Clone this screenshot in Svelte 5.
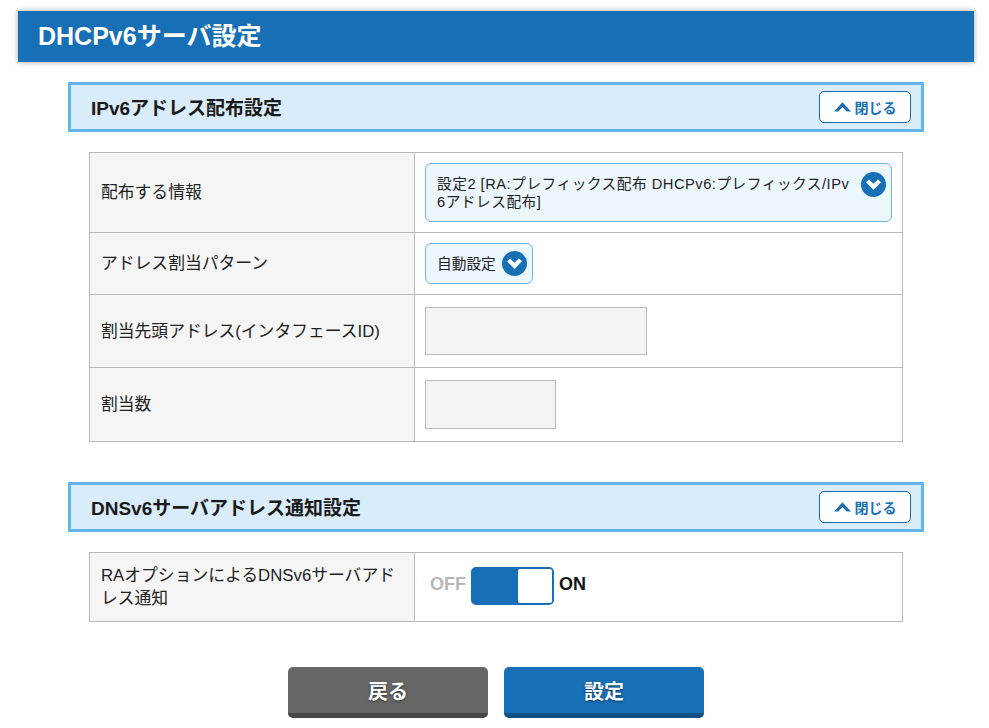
<script>
	// chevron and close button repeat, so they live in snippets below
	const closeLabel = '閉じる';
</script>

{#snippet chevron()}
	<svg class="chev" viewBox="0 0 26 26" width="25" height="25" aria-hidden="true">
		<circle cx="13" cy="13" r="13" fill="#176fb5" />
		<path d="M5.2 10.6 L8.4 7.8 L13 12.2 L17.6 7.8 L20.8 10.6 L13 18.6 Z" fill="#fff" />
	</svg>
{/snippet}

{#snippet closeBtn()}
	<button class="close" type="button">
		<svg viewBox="0 0 17 10" width="17" height="10" aria-hidden="true">
			<path d="M0 9.6 L8.5 0.2 L17 9.6 L12.6 9.6 L8.5 5 L4.4 9.6 Z" fill="#176fb5" />
		</svg>
		<span>{closeLabel}</span>
	</button>
{/snippet}

<div class="page">
	<h1>DHCPv6サーバ設定</h1>

	<section class="sec">
		<div class="sec-head">
			<h2>IPv6アドレス配布設定</h2>
			{@render closeBtn()}
		</div>
		<table>
			<tbody>
				<tr class="r1">
					<th>配布する情報</th>
					<td>
						<div class="select wide">
							<span>設定2 [RA:プレフィックス配布 DHCPv6:プレフィックス/IPv6アドレス配布]</span>
							{@render chevron()}
						</div>
					</td>
				</tr>
				<tr class="r2">
					<th>アドレス割当パターン</th>
					<td>
						<div class="select">
							<span>自動設定</span>
							{@render chevron()}
						</div>
					</td>
				</tr>
				<tr class="r3">
					<th>割当先頭アドレス(インタフェースID)</th>
					<td><div class="field f-long"></div></td>
				</tr>
				<tr class="r4">
					<th>割当数</th>
					<td><div class="field f-short"></div></td>
				</tr>
			</tbody>
		</table>
	</section>

	<section class="sec second">
		<div class="sec-head">
			<h2>DNSv6サーバアドレス通知設定</h2>
			{@render closeBtn()}
		</div>
		<table>
			<tbody>
				<tr class="r5">
					<th>RAオプションによるDNSv6サーバアドレス通知</th>
					<td>
						<div class="toggle-row">
							<span class="off">OFF</span>
							<div class="toggle"><div class="knob"></div></div>
							<span class="on">ON</span>
						</div>
					</td>
				</tr>
			</tbody>
		</table>
	</section>

	<div class="actions">
		<button class="btn back" type="button">戻る</button>
		<button class="btn save" type="button">設定</button>
	</div>
</div>

<style>
	:global(body) {
		background: #fff;
		font-family: "Liberation Sans", "Noto Sans CJK JP", sans-serif;
		color: #222;
	}

	.page {
		padding: 11px 15px 10px 18px;
	}

	h1 {
		margin: 0;
		height: 51px;
		line-height: 51px;
		padding-left: 20px;
		background: #176fb5;
		color: #fff;
		font-size: 25px;
		font-weight: 700;
		box-shadow: 0 0 6px rgba(0, 0, 0, 0.35);
	}

	.sec {
		margin: 20px 50px 0;
	}

	.second {
		margin-top: 40px;
	}

	.sec-head {
		display: flex;
		align-items: center;
		justify-content: space-between;
		box-sizing: border-box;
		height: 50px;
		padding: 0 10px 0 20px;
		background: #d9ecfb;
		border: 3px solid #62b4ec;
	}

	h2 {
		margin: 0 0 2px;
		font-size: 19px;
		font-weight: 700;
		color: #1a1a1a;
	}

	.close {
		display: flex;
		align-items: center;
		justify-content: center;
		gap: 4px;
		box-sizing: border-box;
		width: 92px;
		height: 32px;
		padding: 0;
		background: #fff;
		border: 1px solid #176fb5;
		border-radius: 5px;
		color: #176fb5;
		font-family: inherit;
		font-size: 14px;
		font-weight: 700;
	}

	table {
		width: 814px;
		margin: 20px 0 0 21px;
		border-collapse: collapse;
		table-layout: fixed;
	}

	th,
	td {
		border: 1px solid #b9b9b9;
		padding: 0 11px;
		text-align: left;
		font-size: 16.8px;
		font-weight: 400;
		line-height: 23px;
		color: #222;
	}

	th {
		width: 302px;
		background: #f5f5f5;
	}

	td {
		padding: 0 10px;
	}

	.r1 { height: 80px; }
	.r2 { height: 62px; }
	.r3 { height: 73px; }
	.r4 { height: 74px; }
	.r5 { height: 69px; }

	.select {
		display: inline-flex;
		align-items: center;
		gap: 6px;
		box-sizing: border-box;
		height: 41px;
		padding: 0 5px 0 11px;
		background: #ecf6fd;
		border: 1px solid #6fb6e3;
		border-radius: 6px;
		font-size: 14.7px;
		line-height: 18px;
		color: #222;
		vertical-align: middle;
	}

	.wide {
		display: flex;
		align-items: flex-start;
		justify-content: space-between;
		width: 467px;
		height: 59px;
		padding: 8px 5px 0 11px;
		gap: 6px;
	}

	.wide span {
		flex: 1;
		padding-top: 3px;
		letter-spacing: 0.5px;
		word-break: break-all;
	}

	.chev {
		flex: none;
	}

	.field {
		box-sizing: border-box;
		height: 48px;
		background: #f4f4f4;
		border: 1px solid #b9b9b9;
		vertical-align: middle;
	}

	.f-long {
		width: 222px;
	}

	.f-short {
		width: 131px;
		height: 49px;
	}

	.toggle-row {
		display: flex;
		align-items: center;
		gap: 5px;
		padding-left: 5px;
		font-size: 18px;
		font-weight: 700;
		margin-bottom: 6px;
	}

	.off {
		color: #b8b8b8;
	}

	.on {
		color: #111;
	}

	.toggle {
		display: flex;
		justify-content: flex-end;
		box-sizing: border-box;
		width: 83px;
		height: 38px;
		margin-top: 3px;
		background: #176fb5;
		border: 2px solid #176fb5;
		border-radius: 5px;
	}

	.knob {
		width: 34px;
		background: #fff;
		border-radius: 2px;
	}

	.actions {
		display: flex;
		justify-content: center;
		gap: 16px;
		margin-top: 45px;
	}

	.btn {
		box-sizing: border-box;
		width: 200px;
		height: 51px;
		padding: 0;
		border: 0;
		border-radius: 5px;
		color: #fff;
		font-family: inherit;
		font-size: 20px;
		font-weight: 700;
		text-shadow: 0 1px 2px rgba(0, 0, 0, 0.5);
	}

	.back {
		background: #666;
		border-bottom: 5px solid #474747;
	}

	.save {
		background: #176fb5;
		border-bottom: 5px solid #0f4f86;
	}
</style>
